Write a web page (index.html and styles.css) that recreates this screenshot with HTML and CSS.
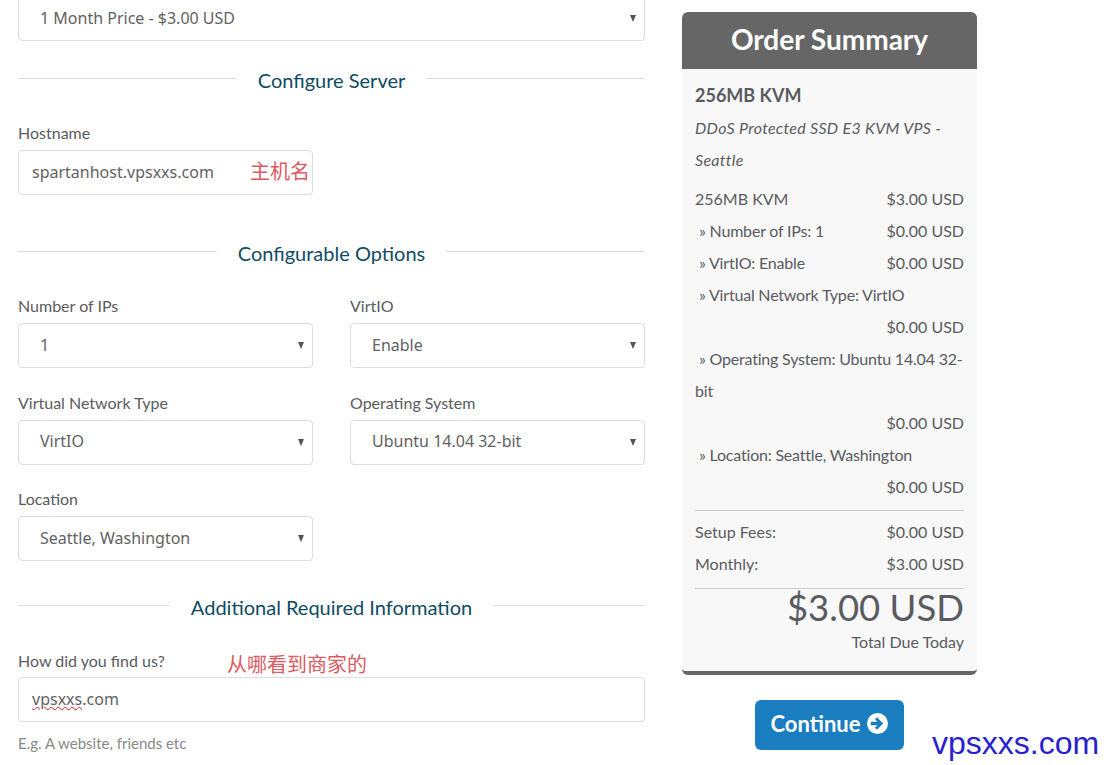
FILE: index.html
```html
<!DOCTYPE html>
<html lang="en">
<head>
  <meta charset="UTF-8">
  <title>Configure</title>
  <link rel="stylesheet" href="styles.css">
</head>
<body>
  <div class="page">
    <div class="config">
      <div class="select-box"><select><option>1 Month Price - $3.00 USD</option></select></div>

      <div class="sub-heading heading-server"><span>Configure Server</span></div>
      <div class="field">
        <label>Hostname</label>
        <div class="hostname-box">
          <div class="text-input">spartanhost.vpsxxs.com</div>
          <span class="note note-host">主机名</span>
        </div>
      </div>

      <div class="sub-heading heading-options"><span>Configurable Options</span></div>
      <div class="options-grid">
        <div class="field">
          <label>Number of IPs</label>
          <div class="select-box"><select><option>1</option></select></div>
        </div>
        <div class="field">
          <label>VirtIO</label>
          <div class="select-box"><select><option>Enable</option></select></div>
        </div>
        <div class="field">
          <label>Virtual Network Type</label>
          <div class="select-box"><select><option>VirtIO</option></select></div>
        </div>
        <div class="field">
          <label>Operating System</label>
          <div class="select-box"><select><option>Ubuntu 14.04 32-bit</option></select></div>
        </div>
        <div class="field">
          <label>Location</label>
          <div class="select-box"><select><option>Seattle, Washington</option></select></div>
        </div>
      </div>

      <div class="sub-heading heading-extra"><span>Additional Required Information</span></div>
      <div class="field field-find">
        <label>How did you find us?</label>
        <span class="note note-find">从哪看到商家的</span>
        <div class="text-input"><span class="misspelt">vpsxxs</span>.com</div>
        <p class="help">E.g. A website, friends etc</p>
      </div>
    </div>

    <div class="sidebar">
      <div class="summary">
        <h2 class="summary-title">Order Summary</h2>
        <div class="summary-body">
          <div class="product-name">256MB KVM</div>
          <div class="product-group">DDoS Protected SSD E3 KVM VPS - Seattle</div>
          <div class="line"><span>256MB KVM</span><span class="price">$3.00 USD</span></div>
          <div class="line"><span class="sub">» Number of IPs: 1</span><span class="price">$0.00 USD</span></div>
          <div class="line"><span class="sub">» VirtIO: Enable</span><span class="price">$0.00 USD</span></div>
          <div class="line"><span class="sub">» Virtual Network Type: VirtIO</span><span class="price">$0.00 USD</span></div>
          <div class="line"><span class="sub">» Operating System: Ubuntu 14.04 32-<wbr>bit</span><span class="price">$0.00 USD</span></div>
          <div class="line"><span class="sub">» Location: Seattle, Washington</span><span class="price">$0.00 USD</span></div>
          <div class="rule rule-fees"></div>
          <div class="line"><span>Setup Fees:</span><span class="price">$0.00 USD</span></div>
          <div class="line"><span>Monthly:</span><span class="price">$3.00 USD</span></div>
          <div class="rule rule-total"></div>
          <div class="total">$3.00 USD</div>
          <div class="total-label">Total Due Today</div>
        </div>
      </div>
      <button class="continue">Continue
        <svg class="continue-icon" viewBox="0 0 20 20" width="21" height="21">
          <circle cx="10" cy="10" r="10" fill="#fff"/>
          <path d="M3.6 8.3h6.3L7.6 6l1.9-1.9L15.4 10l-5.9 5.9L7.6 14l2.3-2.3H3.6z" fill="#1a7dc0"/>
        </svg>
      </button>
    </div>
  </div>
  <div class="watermark">vpsxxs.com</div>
</body>
</html>
```

FILE: styles.css
```css
body {
  margin: 0;
  height: 765px;
  overflow: hidden;
  position: relative;
  background: #fff;
  font-family: Lato, "Noto Sans", sans-serif;
  font-size: 16px;
  color: #5a5b60;
}
.page {
  display: flex;
  gap: 37px;
  margin: -4px 0 0 18px;
}
.config {
  width: 627px;
}
.sidebar {
  width: 295px;
  padding-top: 16px;
  display: flex;
  flex-direction: column;
  align-items: center;
}

/* section headings with a line each side */
.sub-heading {
  display: flex;
  align-items: center;
  color: #0f4c63;
  font-size: 20px;
  line-height: 28px;
}
.sub-heading span {
  padding: 0 21px;
}
.sub-heading::before,
.sub-heading::after {
  content: "";
  flex: 1;
  height: 1px;
  margin-bottom: 4px;
  background: #ddd;
}
.heading-server {
  margin-top: 25px;
}
.heading-options {
  margin-top: 44px;
}
.heading-extra {
  margin-top: 32px;
}

/* form fields */
.field {
  position: relative;
}
.field label {
  display: block;
  height: 20px;
  line-height: 20px;
  margin-bottom: 7px;
}
.heading-server + .field {
  margin-top: 29px;
}
.hostname-box {
  position: relative;
  width: 295px;
}
.text-input,
.select-box select {
  box-sizing: border-box;
  display: block;
  width: 100%;
  height: 45px;
  border: 1px solid #ddd;
  border-radius: 4px;
  background: #fff;
  color: #626262;
  font-family: "Noto Sans", sans-serif;
  font-size: 16px;
}
.text-input {
  line-height: 43px;
  padding-left: 13px;
}
.select-box {
  position: relative;
}
.select-box select {
  appearance: none;
  padding: 0 0 2px 21px;
}
.select-box::after {
  content: "";
  position: absolute;
  top: 19px;
  right: 9px;
  border-left: 3.5px solid transparent;
  border-right: 3.5px solid transparent;
  border-top: 7px solid #555;
}
.options-grid {
  display: grid;
  grid-template-columns: 295px 295px;
  column-gap: 37px;
  row-gap: 24.5px;
  margin-top: 29px;
}
.field-find {
  margin-top: 30px;
}
.field-find label {
  margin-bottom: 6px;
}
.misspelt {
  text-decoration: underline wavy #d02020 1px;
}
.help {
  margin: 11px 0 0;
  line-height: 20px;
  color: #888;
  font-size: 15px;
}
.note {
  position: absolute;
  color: #dc5a62;
  font-family: "Noto Sans CJK SC", sans-serif;
  font-size: 20px;
  line-height: 26px;
}
.note-host {
  top: 8px;
  left: 232px;
}
.note-find {
  top: 0;
  left: 209px;
}

/* order summary */
.summary {
  width: 100%;
}
.summary-title {
  margin: 0;
  height: 57px;
  border-radius: 6px 6px 0 0;
  background: #666;
  color: #fff;
  font-size: 28px;
  font-weight: 700;
  line-height: 55px;
  text-align: center;
}
.summary-body {
  box-sizing: border-box;
  height: 606px;
  padding: 12px 13px 0;
  border-bottom: 4px solid #666;
  border-radius: 0 0 6px 6px;
  background: #f8f8f8;
  line-height: 32px;
}
.product-name {
  font-size: 18px;
  font-weight: 700;
  line-height: 28px;
}
.product-group {
  margin: 3px 0 7px;
  font-style: italic;
  letter-spacing: 0.3px;
}
.line {
  display: flex;
  flex-wrap: wrap;
  justify-content: space-between;
}
.line .price {
  margin-left: auto;
}
.sub {
  text-indent: 4px;
  letter-spacing: -0.2px;
}
.rule {
  height: 1px;
  background: #ccc;
}
.rule-fees {
  margin: 7px 0 5px;
}
.rule-total {
  margin-top: 8px;
}
.total {
  margin-top: -2px;
  font-size: 36.5px;
  line-height: 41px;
  text-align: right;
}
.total-label {
  line-height: 28px;
  text-align: right;
}
.continue {
  display: flex;
  align-items: center;
  justify-content: center;
  gap: 7px;
  box-sizing: border-box;
  width: 149px;
  height: 50px;
  margin-top: 25px;
  padding: 0 0 3px;
  border: 0;
  border-radius: 6px;
  background: #1a7dc0;
  color: #fff;
  font-family: Lato, sans-serif;
  font-size: 22px;
  font-weight: 700;
}
.watermark {
  position: absolute;
  top: 723px;
  left: 932px;
  color: #2a1fd0;
  font-family: "Liberation Sans", sans-serif;
  font-size: 32px;
  line-height: 40px;
}
```
